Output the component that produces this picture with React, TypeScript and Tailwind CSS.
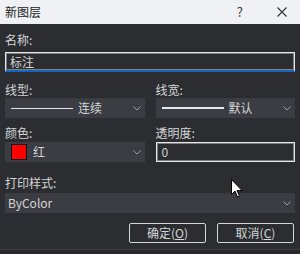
import React from "react";

const font = { fontFamily: '"Noto Sans CJK SC", "Noto Sans", sans-serif' };

function Chevron() {
  return (
    <svg width="8" height="5" viewBox="0 0 8 5" className="shrink-0">
      <path d="M0.5 0.5 L4 4 L7.5 0.5" fill="none" stroke="#9a9ca0" strokeWidth="1" />
    </svg>
  );
}

function Label({ children }: { children: React.ReactNode }) {
  return <div className="h-[16px] text-[12px] leading-[16px] text-[#d4d5d7]">{children}</div>;
}

function Select({ children }: { children: React.ReactNode }) {
  return (
    <div className="flex h-[20px] items-center bg-[#3b3d42] pl-[6px] pr-[4px]">
      <div className="flex flex-1 items-center text-[12px] leading-[16px] text-[#d4d5d7]">{children}</div>
      <Chevron />
    </div>
  );
}

function Button({ label, keyChar }: { label: string; keyChar: string }) {
  return (
    <button
      type="button"
      className="flex h-[20px] w-[77px] items-center justify-center rounded-[2px] border border-[#d6d6d6] bg-[#2b2d31] text-[12px] leading-[16px] text-[#d4d5d7]"
    >
      {label}(<span className="underline">{keyChar}</span>)
    </button>
  );
}

export default function App() {
  return (
    <div className="relative flex h-[254px] w-[300px] flex-col overflow-hidden" style={font}>
      {/* Title bar */}
      <div className="flex h-[24px] items-center bg-[#eff1f4] pl-[5px] text-[12px] text-[#1a1a1a]">
        <span className="flex-1">新图层</span>
        <span className="mr-[34px] text-[13px] text-[#333]">?</span>
        <svg width="10" height="10" viewBox="0 0 10 10" className="mr-[13px]">
          <path d="M0.5 0.5 L9.5 9.5 M9.5 0.5 L0.5 9.5" stroke="#333" strokeWidth="1.1" />
        </svg>
      </div>

      {/* Body */}
      <div className="flex flex-1 flex-col bg-[#2b2d31] px-[5px] pt-[8px]">
        <Label>名称:</Label>
        <div className="mt-[4px] flex h-[20px] items-center border border-b-2 border-[#e6e6e6] border-b-[#1565c0] pl-[4px] text-[12px] leading-[16px] text-[#d4d5d7] shadow-[inset_0_0_0_1px_#7c7e82]">
          标注
        </div>

        <div className="mt-[10px] grid grid-cols-2 gap-x-[11px]">
          <div>
            <Label>线型:</Label>
            <Select>
              <span className="h-px w-[62px] bg-[#e6e6e6]" />
              <span className="ml-[5px]">连续</span>
            </Select>
          </div>
          <div>
            <Label>线宽:</Label>
            <Select>
              <span className="h-[2px] w-[62px] bg-[#e6e6e6]" />
              <span className="ml-[5px]">默认</span>
            </Select>
          </div>
          <div className="mt-[7px]">
            <Label>颜色:</Label>
            <div className="mt-[1px]">
              <Select>
                <span className="h-[16px] w-[16px] border border-[#111] bg-[#ff0000]" />
                <span className="ml-[6px]">红</span>
              </Select>
            </div>
          </div>
          <div className="mt-[7px]">
            <Label>透明度:</Label>
            <div className="mt-[1px] flex h-[20px] items-center border border-[#e6e6e6] pl-[5px] text-[12px] leading-[16px] text-[#d4d5d7] shadow-[inset_0_0_0_1px_#7c7e82]">
              0
            </div>
          </div>
        </div>

        <div className="mt-[13px]">
          <Label>打印样式:</Label>
          <div className="mt-[2px]">
            <div className="flex h-[20px] items-center bg-[#3b3d42] pl-[3px] pr-[4px]">
              <span className="flex-1 text-[12px] leading-[16px] text-[#d4d5d7]">ByColor</span>
              <Chevron />
            </div>
          </div>
        </div>

        <div className="mt-[10px] flex justify-end gap-[11px] pr-[1px]">
          <Button label="确定" keyChar="O" />
          <Button label="取消" keyChar="C" />
        </div>
      </div>
      <div className="h-[5px] border-t border-[#3a3c40] bg-[#26282b]" />

      {/* Mouse cursor */}
      <svg width="13" height="20" viewBox="0 0 13 20" className="absolute left-[231px] top-[179px]">
        <path
          d="M0.5 0.5 L0.5 15.5 L4 12 L6.5 18 L8.5 17 L6 11.5 L11 11.5 Z"
          fill="#ffffff"
          stroke="#000000"
          strokeWidth="1"
          strokeLinejoin="round"
        />
      </svg>
    </div>
  );
}
